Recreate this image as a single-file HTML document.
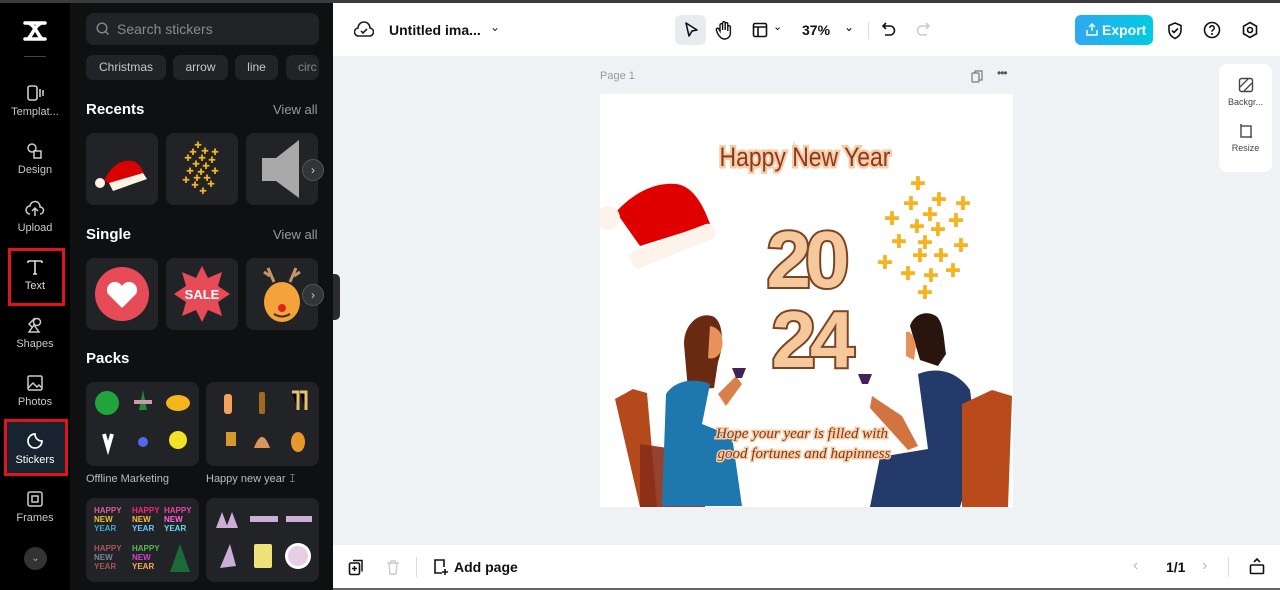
<!DOCTYPE html>
<html><head><meta charset="utf-8"><style>
*{box-sizing:border-box;margin:0;padding:0}
body{width:1280px;height:590px;overflow:hidden;font-family:"Liberation Sans",sans-serif;background:#eef2f5;position:relative}
.abs{position:absolute}
#top{left:0;top:0;width:1280px;height:3px;background:#3b3b3b}
#side{left:0;top:3px;width:70px;height:587px;background:#000}
#panel{left:70px;top:3px;width:263px;height:587px;background:#0f1012}
.nav{position:absolute;left:0;width:70px;text-align:center;color:#c9c9c9;font-size:11px}
.nav svg{display:block;margin:0 auto 4px}
.card{position:absolute;background:#222327;border-radius:8px}
.chip{position:absolute;top:55px;height:25px;background:#222327;border-radius:7px;color:#c8c8c8;font-size:12px;line-height:25px;text-align:center}
.h{position:absolute;left:86px;color:#fff;font-weight:bold;font-size:15px}
.va{position:absolute;left:273px;color:#9a9a9a;font-size:13px}
.arr{position:absolute;width:22px;height:22px;border-radius:50%;background:#333438;border:1px solid #555;color:#ccc;font-size:12px;line-height:20px;text-align:center}
#toolbar{left:333px;top:3px;width:947px;height:53px;background:#fff}
#bottom{left:333px;top:545px;width:947px;height:45px;background:#fff}
</style></head><body>
<div class="abs" id="top"></div>
<div class="abs" id="side">
 <svg class="abs" style="left:22px;top:17px" width="26" height="22" viewBox="0 0 26 22"><path d="M3 3h20M3 19h20M5 3c8 0 12 16 16 16M21 3C13 3 9 19 5 19" fill="none" stroke="#fff" stroke-width="3.5" stroke-linecap="round"/></svg>
 <div class="abs" style="left:24px;top:53px;width:22px;height:1px;background:#444"></div>
 <div class="nav" style="top:81px"><svg width="20" height="18" viewBox="0 0 20 18"><rect x="3" y="2" width="9" height="14" rx="2" fill="none" stroke="#ccc" stroke-width="1.6"/><path d="M15 5v8M18 6v6" stroke="#ccc" stroke-width="1.6"/></svg>Templat...</div>
 <div class="nav" style="top:139px"><svg width="20" height="18" viewBox="0 0 20 18"><circle cx="7" cy="6" r="4" fill="none" stroke="#ccc" stroke-width="1.5"/><rect x="9" y="9" width="7" height="7" fill="none" stroke="#ccc" stroke-width="1.5"/></svg>Design</div>
 <div class="nav" style="top:197px"><svg width="20" height="18" viewBox="0 0 20 18"><path d="M5 14a4 4 0 0 1 0-8 5 5 0 0 1 10 1 3.5 3.5 0 0 1 0 7M10 16V9M7 11l3-3 3 3" fill="none" stroke="#ccc" stroke-width="1.5"/></svg>Upload</div>
 <div class="abs" style="left:8px;top:245px;width:57px;height:58px;border:3px solid #e0141e"></div>
 <div class="nav" style="top:255px;color:#ddd"><svg width="20" height="18" viewBox="0 0 20 18"><path d="M3 3h14M10 3v13M3 3v2M17 3v2M8 16h4" fill="none" stroke="#ddd" stroke-width="1.6"/></svg>Text</div>
 <div class="nav" style="top:313px"><svg width="20" height="18" viewBox="0 0 20 18"><path d="M10 2l-6 6 3 3M9 9l5 7H4z" fill="none" stroke="#ccc" stroke-width="1.5"/><circle cx="12" cy="6" r="3.5" fill="none" stroke="#ccc" stroke-width="1.5"/></svg>Shapes</div>
 <div class="nav" style="top:371px"><svg width="20" height="18" viewBox="0 0 20 18"><rect x="3" y="2" width="14" height="14" rx="1.5" fill="none" stroke="#ccc" stroke-width="1.5"/><path d="M3 14l5-5 4 4 2-2 3 3" fill="none" stroke="#ccc" stroke-width="1.5"/></svg>Photos</div>
 <div class="abs" style="left:4px;top:416px;width:64px;height:57px;border:3px solid #e0141e;background:#17232e"></div>
 <div class="nav" style="top:429px;color:#fff"><svg width="20" height="18" viewBox="0 0 20 18"><path d="M10 2a7 7 0 1 0 7 7c-4 0-7-3-7-7z" fill="none" stroke="#fff" stroke-width="1.7"/></svg>Stickers</div>
 <div class="nav" style="top:487px"><svg width="20" height="18" viewBox="0 0 20 18"><rect x="3" y="2" width="14" height="14" rx="2" fill="none" stroke="#ccc" stroke-width="1.5"/><rect x="7" y="6" width="6" height="6" fill="none" stroke="#ccc" stroke-width="1.5"/></svg>Frames</div>
 <div class="abs" style="left:24px;top:544px;width:23px;height:23px;border-radius:50%;background:#333;color:#aaa;font-size:10px;line-height:23px;text-align:center">⌄</div>
</div>
<div class="abs" id="panel"></div>
<div class="abs" style="left:86px;top:13px;width:233px;height:32px;background:#222327;border-radius:8px;color:#8a8a8a;font-size:14px;line-height:32px;padding-left:31px">Search stickers
 <svg class="abs" style="left:10px;top:9px" width="14" height="14" viewBox="0 0 14 14"><circle cx="6" cy="6" r="4.8" fill="none" stroke="#888" stroke-width="1.4"/><path d="M9.5 9.5l3 3" stroke="#888" stroke-width="1.4"/></svg></div>
<div class="chip" style="left:86px;width:80px">Christmas</div>
<div class="chip" style="left:173px;width:55px">arrow</div>
<div class="chip" style="left:235px;width:43px">line</div>
<div class="chip" style="left:286px;width:33px;overflow:hidden;text-align:left;padding-left:12px;color:#888">circ</div>
<div class="h" style="top:101px">Recents</div><div class="va" style="top:102px">View all</div>
<div class="card" style="left:86px;top:133px;width:72px;height:72px"><svg width="72" height="72"><path d="M18 48c6-14 16-22 28-20 6 1 9 6 12 12l-30 12z" fill="#d80000"/><path d="M23 50l34-10 4 6-34 12z" fill="#fdf2e6"/><circle cx="14" cy="50" r="5" fill="#fdf2e6"/></svg></div>
<div class="card" style="left:166px;top:133px;width:72px;height:72px"><svg width="72" height="72" fill="#f5b51c" font-family="DejaVu Sans" font-weight="bold" font-size="9" text-anchor="middle">
 <text x="32" y="15">✚</text><text x="27" y="22">✚</text><text x="39" y="21">✚</text><text x="49" y="22">✚</text>
 <text x="22" y="28">✚</text><text x="36" y="28">✚</text><text x="46" y="30">✚</text><text x="30" y="34">✚</text>
 <text x="40" y="36">✚</text><text x="24" y="41">✚</text><text x="35" y="42">✚</text><text x="49" y="41">✚</text>
 <text x="31" y="48">✚</text><text x="41" y="48">✚</text><text x="20" y="50">✚</text><text x="45" y="54">✚</text>
 <text x="29" y="55">✚</text><text x="37" y="61">✚</text></svg></div>
<div class="card" style="left:246px;top:133px;width:72px;height:72px;overflow:hidden"><svg width="72" height="72"><path d="M16 25h14l23-18v58L30 48H16z" fill="#a9a9a9"/></svg></div>
<div class="arr" style="left:302px;top:159px">›</div>
<div class="h" style="top:226px">Single</div><div class="va" style="top:227px">View all</div>
<div class="card" style="left:86px;top:258px;width:72px;height:72px"><svg width="72" height="72"><circle cx="36" cy="36" r="27" fill="#e84b58"/><path d="M36 50L22 36a7 7 0 0 1 14-8 7 7 0 0 1 14 8z" fill="#fff"/></svg></div>
<div class="card" style="left:166px;top:258px;width:72px;height:72px"><svg width="72" height="72"><polygon points="36,8 42,20 56,14 52,28 64,36 52,44 56,58 42,52 36,64 30,52 16,58 20,44 8,36 20,28 16,14 30,20" fill="#e84b58"/><text x="36" y="41" font-size="13" font-weight="bold" fill="#fff" text-anchor="middle" font-family="Liberation Sans">SALE</text></svg></div>
<div class="card" style="left:246px;top:258px;width:72px;height:72px"><svg width="72" height="72"><path d="M22 10l6 14M50 10l-6 14M18 14l6 4M54 14l-6 4" stroke="#c89468" stroke-width="3"/><ellipse cx="36" cy="44" rx="18" ry="20" fill="#f4a23a"/><circle cx="36" cy="50" r="4" fill="#d22"/><path d="M28 56q8 5 16 0" stroke="#333" stroke-width="2" fill="none"/></svg></div>
<div class="arr" style="left:302px;top:284px">›</div>
<div class="h" style="top:350px">Packs</div>
<div class="card" style="left:86px;top:382px;width:113px;height:84px"><svg width="113" height="84"><circle cx="21" cy="21" r="12" fill="#1fa53c"/><path d="M57 8l-4 20h8z" fill="#1a8c3a"/><rect x="48" y="18" width="18" height="4" fill="#c9a"/><ellipse cx="92" cy="21" rx="12" ry="8" fill="#f5b51c"/><path d="M18 52l4 14 4-14" stroke="#fff" stroke-width="4" fill="none"/><circle cx="57" cy="60" r="5" fill="#5566ee"/><circle cx="92" cy="58" r="9" fill="#f1e227"/></svg></div>
<div class="card" style="left:206px;top:382px;width:113px;height:84px"><svg width="113" height="84"><rect x="18" y="12" width="8" height="20" rx="3" fill="#f2a25a"/><rect x="53" y="10" width="6" height="22" rx="2" fill="#a06a20"/><path d="M86 10h6v18M94 10h6v18" stroke="#e8c070" stroke-width="3"/><rect x="20" y="50" width="10" height="14" fill="#d49a2a"/><path d="M48 66q8-22 16 0z" fill="#d9965c"/><ellipse cx="92" cy="60" rx="7" ry="10" fill="#e8982a"/></svg></div>
<div class="abs" style="left:86px;top:473px;color:#bbb;font-size:11px">Offline Marketing</div>
<div class="abs" style="left:206px;top:473px;color:#bbb;font-size:11px">Happy new year 𝙸</div>
<div class="card" style="left:86px;top:498px;width:113px;height:84px;font-size:8px;font-weight:bold;line-height:9px">
 <div class="abs" style="left:8px;top:8px;color:#e05a9a">HAPPY<br><span style="color:#f0c030">NEW</span><br><span style="color:#4ac">YEAR</span></div>
 <div class="abs" style="left:46px;top:8px;color:#f27">HAPPY<br><span style="color:#fb3">NEW</span><br><span style="color:#6cf">YEAR</span></div>
 <div class="abs" style="left:78px;top:8px;color:#e4a">HAPPY<br><span style="color:#f6d">NEW</span><br><span style="color:#6de">YEAR</span></div>
 <div class="abs" style="left:8px;top:46px;color:#a55">HAPPY<br><span style="color:#789">NEW</span><br>YEAR</div>
 <div class="abs" style="left:46px;top:46px;color:#5b5">HAPPY<br><span style="color:#c4c">NEW</span><br><span style="color:#fa5">YEAR</span></div>
 <div class="abs" style="left:84px;top:46px;color:#283"><svg width="20" height="28"><path d="M10 0L20 28H0z" fill="#1a6a3a"/></svg></div>
</div>
<div class="card" style="left:206px;top:498px;width:113px;height:84px"><svg width="113" height="84"><path d="M10 30l6-16 6 16zM20 30l6-16 6 16z" fill="#c8b0d8"/><rect x="44" y="18" width="28" height="6" fill="#c8b0d8"/><rect x="80" y="18" width="26" height="6" fill="#c8b0d8"/><path d="M14 70l10-24 6 22z" fill="#c8b0d8"/><rect x="48" y="46" width="18" height="24" rx="2" fill="#efe27a"/><circle cx="92" cy="58" r="13" fill="#fff"/><circle cx="92" cy="58" r="10" fill="#e6cfe6"/></svg></div>
<div class="abs" style="left:333px;top:274px;width:7px;height:46px;background:#2a2b2e;border-radius:0 5px 5px 0"></div>

<div class="abs" id="toolbar">
 <svg class="abs" style="left:21px;top:18px" width="20" height="18" viewBox="0 0 20 18"><path d="M5 15a4 4 0 0 1-1-8 6 6 0 0 1 12 0 4 4 0 0 1-1 8z" fill="none" stroke="#222" stroke-width="1.6"/><path d="M7 10l2 2 4-4" fill="none" stroke="#222" stroke-width="1.6"/></svg>
 <div class="abs" style="left:56px;top:19px;font-size:14px;font-weight:bold;color:#111">Untitled ima...</div>
 <div class="abs" style="left:157px;top:17px;font-size:12px;color:#222">⌄</div>
 <div class="abs" style="left:342px;top:12px;width:31px;height:30px;background:#e8ecef;border-radius:6px"></div>
 <svg class="abs" style="left:349px;top:18px" width="18" height="18" viewBox="0 0 18 18"><path d="M4 2l11 7-5 1-3 5z" fill="none" stroke="#111" stroke-width="1.6" stroke-linejoin="round"/></svg>
 <svg class="abs" style="left:382px;top:17px" width="18" height="20" viewBox="0 0 18 20"><path d="M5 11V5a1.3 1.3 0 0 1 2.6 0v5V3a1.3 1.3 0 0 1 2.6 0v7V4a1.3 1.3 0 0 1 2.6 0v7V7a1.3 1.3 0 0 1 2.6 0v6c0 4-3 6-6 6s-5-2-7-6l-1-3a1.3 1.3 0 0 1 2.4-1z" fill="none" stroke="#111" stroke-width="1.4"/></svg>
 <svg class="abs" style="left:419px;top:19px" width="16" height="16" viewBox="0 0 16 16"><rect x="1.5" y="1.5" width="13" height="13" rx="1.5" fill="none" stroke="#111" stroke-width="1.6"/><path d="M1.5 5h13M6 5v9.5" stroke="#111" stroke-width="1.6"/></svg>
 <div class="abs" style="left:440px;top:17px;font-size:11px">⌄</div>
 <div class="abs" style="left:469px;top:19px;font-size:14px;font-weight:bold;color:#111">37%</div>
 <div class="abs" style="left:511px;top:17px;font-size:12px">⌄</div>
 <div class="abs" style="left:535px;top:19px;width:1px;height:17px;background:#ddd"></div>
 <svg class="abs" style="left:548px;top:18px" width="16" height="18" viewBox="0 0 16 18"><path d="M5 2L2 5l3 3M2 5h7a4.5 4.5 0 0 1 0 9H4" fill="none" stroke="#111" stroke-width="1.6"/></svg>
 <svg class="abs" style="left:582px;top:18px" width="16" height="18" viewBox="0 0 16 18"><path d="M11 2l3 3-3 3M14 5H7a4.5 4.5 0 0 0 0 9h5" fill="none" stroke="#ccc" stroke-width="1.6"/></svg>
 <div class="abs" style="left:742px;top:12px;width:78px;height:30px;border-radius:6px;background:linear-gradient(90deg,#2fa8f0,#00cbe0);color:#fff;font-size:14px;font-weight:bold;line-height:30px;padding-left:27px">Export</div>
 <svg class="abs" style="left:753px;top:19px" width="12" height="14" viewBox="0 0 12 14"><path d="M6 9V2M3 5l3-3 3 3M1 8v5h10V8" fill="none" stroke="#fff" stroke-width="1.4"/></svg>
 <svg class="abs" style="left:833px;top:18px" width="18" height="19" viewBox="0 0 18 19"><path d="M9 2l6 2.5v5c0 4-3 6.5-6 8-3-1.5-6-4-6-8v-5z M6 9.5l2 2 4-4" fill="none" stroke="#111" stroke-width="1.6"/></svg>
 <svg class="abs" style="left:870px;top:18px" width="18" height="18" viewBox="0 0 18 18"><circle cx="9" cy="9" r="7.5" fill="none" stroke="#111" stroke-width="1.6"/><path d="M6.8 7a2.2 2.2 0 1 1 3 2c-.7.4-.8.8-.8 1.7" fill="none" stroke="#111" stroke-width="1.5"/><circle cx="9" cy="13" r="1" fill="#111"/></svg>
 <svg class="abs" style="left:908px;top:18px" width="18" height="18" viewBox="0 0 18 18"><path d="M9 1.5l6.5 3.75v7.5L9 16.5l-6.5-3.75v-7.5z" fill="none" stroke="#111" stroke-width="1.6"/><circle cx="9" cy="9" r="2.5" fill="none" stroke="#111" stroke-width="1.6"/></svg>
</div>

<div class="abs" style="left:600px;top:70px;font-size:11px;color:#999">Page 1</div>
<svg class="abs" style="left:971px;top:70px" width="12" height="13" viewBox="0 0 12 13"><rect x="1" y="3" width="7" height="9" rx="1" fill="none" stroke="#777" stroke-width="1.2"/><path d="M4 3V1h7v9H8" fill="none" stroke="#777" stroke-width="1.2"/></svg>
<div class="abs" style="left:997px;top:66px;font-size:12px;color:#555;letter-spacing:-1px">•••</div>

<div class="abs" style="left:1219px;top:64px;width:53px;height:108px;background:#fff;border-radius:8px;font-size:9px;color:#444;text-align:center">
 <svg style="display:block;margin:13px auto 4px" width="16" height="16" viewBox="0 0 16 16"><rect x="1.5" y="1.5" width="13" height="13" rx="2" fill="none" stroke="#444" stroke-width="1.4"/><path d="M2 10l8-8M6 14l8-8" stroke="#444" stroke-width="1.3"/></svg>Backgr...
 <svg style="display:block;margin:16px auto 4px" width="16" height="16" viewBox="0 0 16 16"><rect x="3" y="3" width="10" height="11" fill="none" stroke="#444" stroke-width="1.4"/><path d="M3 1v2M13 13v2" stroke="#444" stroke-width="1.4"/></svg>Resize
</div>

<svg class="abs" style="left:600px;top:94px" width="413" height="413" viewBox="0 0 413 413">
 <rect width="413" height="413" fill="#fff"/>
 <text x="205" y="72" font-family="Liberation Sans" font-size="27" fill="#8b3a2a" stroke="#f9cda2" stroke-width="5" paint-order="stroke" text-anchor="middle" transform="translate(205 0) scale(0.85 1) translate(-205 0)">Happy New Year</text>
 <path d="M16 118c18-20 40-30 60-28 16 2 26 18 34 40l-70 22z" fill="#e00000"/>
 <path d="M32 158l74-28c6-2 12 8 8 14l-74 30c-8 2-12-12-8-16z" fill="#fdf3ea"/>
 <circle cx="8" cy="124" r="12" fill="#fdf3ea"/>
 <g fill="#f6b21f" font-family="DejaVu Sans" font-weight="bold" font-size="19" text-anchor="middle">
  <text x="318" y="96">✚</text><text x="311" y="116">✚</text><text x="339" y="112">✚</text><text x="363" y="116">✚</text>
  <text x="292" y="131">✚</text><text x="330" y="127">✚</text><text x="356" y="133">✚</text><text x="317" y="139">✚</text>
  <text x="338" y="142">✚</text><text x="299" y="154">✚</text><text x="325" y="155">✚</text><text x="361" y="158">✚</text>
  <text x="320" y="168">✚</text><text x="341" y="168">✚</text><text x="285" y="175">✚</text><text x="353" y="183">✚</text>
  <text x="308" y="186">✚</text><text x="331" y="188">✚</text><text x="325" y="205">✚</text>
 </g>
 <g font-family="Liberation Sans" font-weight="bold" font-size="80" fill="#f5c99c" stroke="#7b4523" stroke-width="4" paint-order="stroke" text-anchor="middle">
  <text x="205" y="193" letter-spacing="-6">20</text>
  <text x="210" y="273" letter-spacing="-6">24</text>
 </g>
 <path d="M15 305l18-10 14 4 10 114H40z" fill="#b4491c"/>
 <path d="M40 350l70 10-5 53H40z" fill="#8a2d1a" opacity=".9"/>
 <path d="M84 250c0-20 15-32 28-28 12 4 12 30 6 46l-4 26-26 2z" fill="#6a2a12"/>
 <path d="M110 232c10 2 14 10 12 22-2 8-8 12-14 10z" fill="#e8915a"/>
 <path d="M66 300c10-15 30-16 44-10l-8 40 30 12 10 70H62z" fill="#1f78ad"/>
 <path d="M118 300l18-18 6 8-16 22z" fill="#d9804a"/>
 <path d="M132 274h14l-4 10h-6z" fill="#442255"/>
 <path d="M310 232c4-12 16-16 26-10 8 6 8 26 10 38l-8 12-18-6z" fill="#2a140e"/>
 <path d="M306 238c4-2 8 4 10 14l-2 14-8-4z" fill="#e8905a"/>
 <path d="M318 280c20-8 40-2 52 16l8 60-18 57h-90l10-50 48-8z" fill="#243a6a"/>
 <path d="M272 302l30 20 16 30-10 4-38-42z" fill="#d27440"/>
 <path d="M258 280h14l-4 10h-6z" fill="#442255"/>
 <path d="M362 310l30-14 20 6-4 111h-46z" fill="#b84a1c"/>
 <g font-family="Liberation Serif" font-style="italic" font-size="15" fill="#7b3a2a" stroke="#f9cda2" stroke-width="3" paint-order="stroke" text-anchor="middle">
  <text x="202" y="344">Hope your year is filled with</text>
  <text x="204" y="364">good fortunes and hapinness</text>
 </g>
</svg>

<div class="abs" id="bottom">
 <svg class="abs" style="left:15px;top:14px" width="16" height="17" viewBox="0 0 16 17"><rect x="1.5" y="4" width="10" height="11.5" rx="1.5" fill="none" stroke="#111" stroke-width="1.6"/><path d="M5 1.5h9v11M6.5 7v5M4 9.5h5" fill="none" stroke="#111" stroke-width="1.5"/></svg>
 <svg class="abs" style="left:53px;top:14px" width="14" height="17" viewBox="0 0 14 17"><path d="M1 4h12M5 4V2h4v2M3 4l1 11h6l1-11" fill="none" stroke="#ccc" stroke-width="1.4"/></svg>
 <div class="abs" style="left:83px;top:12px;width:1px;height:20px;background:#ddd"></div>
 <svg class="abs" style="left:100px;top:13px" width="16" height="18" viewBox="0 0 16 18"><path d="M9 15H2V2h9v7" fill="none" stroke="#111" stroke-width="1.6"/><path d="M12 11v6M9 14h6" stroke="#111" stroke-width="1.6"/></svg>
 <div class="abs" style="left:121px;top:14px;font-size:14px;font-weight:bold;color:#111">Add page</div>
 <div class="abs" style="left:800px;top:12px;font-size:16px;color:#bbb">‹</div>
 <div class="abs" style="left:833px;top:14px;font-size:14px;font-weight:bold;color:#111">1/1</div>
 <div class="abs" style="left:869px;top:12px;font-size:16px;color:#bbb">›</div>
 <div class="abs" style="left:895px;top:12px;width:1px;height:20px;background:#ddd"></div>
 <svg class="abs" style="left:916px;top:12px" width="16" height="18" viewBox="0 0 16 18"><rect x="1.5" y="8" width="13" height="8.5" rx="1" fill="none" stroke="#111" stroke-width="1.6"/><path d="M5 5l3-3 3 3" fill="none" stroke="#111" stroke-width="1.6"/></svg>
</div>
<div class="abs" style="left:333px;top:588px;width:947px;height:2px;background:#666"></div>
</body></html>
